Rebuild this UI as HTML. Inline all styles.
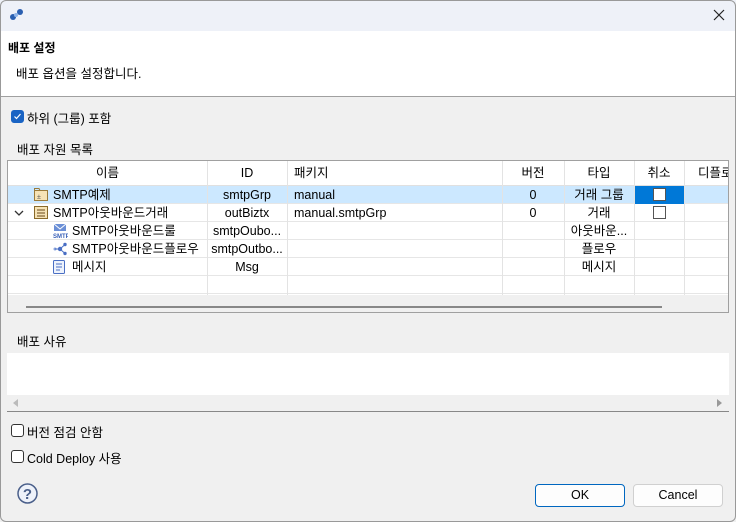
<!DOCTYPE html>
<html><head><meta charset="utf-8"><style>
*{box-sizing:border-box;margin:0;padding:0}
body{width:736px;height:522px;overflow:hidden;background:#f0f0f0;font-family:"Liberation Sans","Noto Sans CJK KR",sans-serif;font-size:12.5px;color:#000;position:relative}
.abs{position:absolute}
.cb{position:absolute;width:13px;height:13px;border:1px solid #333;border-radius:3px;background:#fff}
.tbl{position:absolute;left:7px;top:160px;width:722px;height:153px;border:1px solid #a0a0a0;background:#fff;overflow:hidden}
.row{position:absolute;left:0;width:720px;height:18px;border-bottom:1px solid #e6e6e6}
.vl{position:absolute;top:0;width:1px;height:134px;background:#e3e3e3}
.c{position:absolute;top:0;height:18px;line-height:18px;white-space:nowrap}
.ctr{text-align:center}
</style></head><body>
<div class="abs" style="left:0;top:0;width:736px;height:31px;background:#eef1f8"></div>
<svg class="abs" style="left:9px;top:7px" width="16" height="14" viewBox="0 0 16 14"><circle cx="4" cy="10" r="3" fill="#2a5fb0"/><circle cx="11" cy="5" r="3" fill="#2a5fb0"/><circle cx="7" cy="8" r="2" fill="#8fb4e8"/></svg>
<svg class="abs" style="left:713px;top:9px" width="12" height="12"><path d="M1 1L11 11M11 1L1 11" stroke="#222" stroke-width="1.2"/></svg>
<div class="abs" style="left:0;top:31px;width:736px;height:66px;background:#fff;border-bottom:1px solid #a0a0a0"></div>
<div class="abs" style="left:8px;top:39px;font-weight:bold;font-size:12px">배포 설정</div>
<div class="abs" style="left:16px;top:63px">배포 옵션을 설정합니다.</div>
<div class="cb" style="left:11px;top:110px;background:#1a64c4;border-color:#1a64c4"><svg width="11" height="11" style="position:absolute;left:0;top:0"><path d="M2.5 5.5L4.5 7.5L8.5 3" stroke="#fff" fill="none" stroke-width="1.2"/></svg></div>
<div class="abs" style="left:27px;top:108px">하위 (그룹) 포함</div>
<div class="abs" style="left:17px;top:139px">배포 자원 목록</div>
<div class="tbl">
 <div class="row" style="top:0;height:25px;border-bottom:1px solid #e0e0e0">
  <div class="c ctr" style="left:0;width:199px;height:24px;line-height:24px">이름</div>
  <div class="c ctr" style="left:199px;width:80px;height:24px;line-height:24px">ID</div>
  <div class="c" style="left:286px;height:24px;line-height:24px">패키지</div>
  <div class="c ctr" style="left:494px;width:62px;height:24px;line-height:24px">버전</div>
  <div class="c ctr" style="left:556px;width:70px;height:24px;line-height:24px">타입</div>
  <div class="c ctr" style="left:626px;width:50px;height:24px;line-height:24px">취소</div>
  <div class="c" style="left:690px;height:24px;line-height:24px">디플로</div>
 </div>
 <div class="row" style="top:25px;background:#cce8ff">
  <div class="abs" style="left:626px;top:0;width:51px;height:18px;background:#0078d7"></div>
  <div class="abs" style="left:645px;top:2px;width:13px;height:13px;background:#fff;border:1px solid #555"></div>
  <svg class="abs" style="left:26px;top:2px" width="14" height="13"><rect x="0.5" y="2.5" width="13" height="10" fill="#f6e3b6" stroke="#9a7a3a"/><path d="M0.5 2.5V0.5H5L6 2.5" fill="none" stroke="#9a7a3a"/><text x="3" y="11" font-size="7" fill="#555">±</text></svg>
  <div class="c" style="left:45px">SMTP예제</div><div class="c ctr" style="left:199px;width:80px">smtpGrp</div><div class="c" style="left:286px">manual</div><div class="c ctr" style="left:494px;width:62px">0</div><div class="c ctr" style="left:556px;width:70px">거래 그룹</div>
 </div>
 <div class="row" style="top:43px">
  <svg class="abs" style="left:6px;top:6px" width="10" height="6"><path d="M1 1L5 5L9 1" stroke="#333" fill="none" stroke-width="1.3"/></svg>
  <svg class="abs" style="left:26px;top:2px" width="14" height="13"><rect x="0.5" y="0.5" width="13" height="12" fill="#f6e3b6" stroke="#8a6a2a"/><path d="M3 4H11M3 7H11M3 10H11" stroke="#6a4a1a"/></svg>
  <div class="abs" style="left:645px;top:2px;width:13px;height:13px;background:#fff;border:1px solid #555"></div>
  <div class="c" style="left:45px">SMTP아웃바운드거래</div><div class="c ctr" style="left:199px;width:80px">outBiztx</div><div class="c" style="left:286px">manual.smtpGrp</div><div class="c ctr" style="left:494px;width:62px">0</div><div class="c ctr" style="left:556px;width:70px">거래</div>
 </div>
 <div class="row" style="top:61px">
  <svg class="abs" style="left:44px;top:1px" width="16" height="16"><path d="M2 1H14V8H2Z" fill="#6b8fd6"/><path d="M2 1L8 6L14 1" stroke="#fff" fill="none"/><text x="1" y="15" font-size="6" fill="#3b62b8" font-weight="bold">SMTP</text></svg>
  <div class="c" style="left:64px">SMTP아웃바운드룰</div><div class="c ctr" style="left:199px;width:80px">smtpOubo...</div><div class="c ctr" style="left:556px;width:70px">아웃바운...</div>
 </div>
 <div class="row" style="top:79px">
  <svg class="abs" style="left:44px;top:2px" width="16" height="14"><circle cx="3" cy="7" r="1.5" fill="#8aa4dc"/><circle cx="8" cy="7" r="2.2" fill="#4a6fc4"/><circle cx="13" cy="2.5" r="1.7" fill="#4a6fc4"/><circle cx="13" cy="11.5" r="1.7" fill="#4a6fc4"/><path d="M8 7L13 2.5M8 7L13 11.5M3 7H8" stroke="#4a6fc4"/></svg>
  <div class="c" style="left:64px">SMTP아웃바운드플로우</div><div class="c ctr" style="left:199px;width:80px">smtpOutbo...</div><div class="c ctr" style="left:556px;width:70px">플로우</div>
 </div>
 <div class="row" style="top:97px">
  <svg class="abs" style="left:44px;top:2px" width="14" height="14"><rect x="1.5" y="0.5" width="11" height="13" rx="1" fill="#eef3fc" stroke="#4a6fc4"/><path d="M4 4H10M4 7H10M4 10H8" stroke="#4a6fc4"/></svg>
  <div class="c" style="left:64px">메시지</div><div class="c ctr" style="left:199px;width:80px">Msg</div><div class="c ctr" style="left:556px;width:70px">메시지</div>
 </div>
 <div class="row" style="top:115px"></div>
 <div class="vl" style="left:199px"></div><div class="vl" style="left:279px"></div><div class="vl" style="left:494px"></div><div class="vl" style="left:556px"></div><div class="vl" style="left:626px"></div><div class="vl" style="left:676px"></div>
 <div class="abs" style="left:0;top:134px;width:720px;height:19px;background:#f0f0f0"></div>
 <div class="abs" style="left:18px;top:145px;width:636px;height:2px;background:#888"></div>
</div>
<div class="abs" style="left:17px;top:331px">배포 사유</div>
<div class="abs" style="left:7px;top:353px;width:722px;height:59px;background:#fff;border-bottom:1px solid #888"></div>
<div class="abs" style="left:7px;top:395px;width:722px;height:16px;background:#f0f0f0"></div>
<div class="abs" style="left:13px;top:399px;width:0;height:0;border-top:4px solid transparent;border-bottom:4px solid transparent;border-right:5px solid #bbb"></div>
<div class="abs" style="left:717px;top:399px;width:0;height:0;border-top:4px solid transparent;border-bottom:4px solid transparent;border-left:5px solid #999"></div>
<div class="cb" style="left:11px;top:424px"></div>
<div class="abs" style="left:27px;top:422px">버전 점검 안함</div>
<div class="cb" style="left:11px;top:450px"></div>
<div class="abs" style="left:27px;top:448px">Cold Deploy 사용</div>
<svg class="abs" style="left:17px;top:483px" width="21" height="21"><circle cx="10.5" cy="10.5" r="9.5" fill="#eef2fa" stroke="#4a5f8a" stroke-width="1.5"/><text x="10.5" y="16" font-size="15" font-weight="bold" text-anchor="middle" fill="#4a5f8a" font-family="Liberation Sans">?</text></svg>
<div class="abs" style="left:535px;top:484px;width:90px;height:23px;border:1px solid #0067c0;border-radius:4px;background:#fdfdfd;text-align:center;line-height:21px">OK</div>
<div class="abs" style="left:633px;top:484px;width:90px;height:23px;border:1px solid #d0d0d0;border-radius:4px;background:#fdfdfd;text-align:center;line-height:21px">Cancel</div>
<div class="abs" style="left:0;top:0;width:736px;height:522px;border:1px solid #999;border-radius:6px;pointer-events:none"></div>
</body></html>
